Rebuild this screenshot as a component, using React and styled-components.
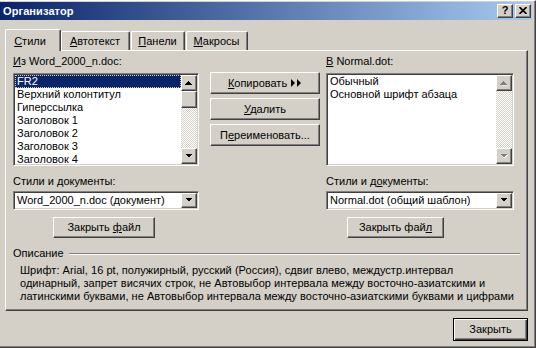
import React from 'react';
import styled, { createGlobalStyle, css } from 'styled-components';

const Global = createGlobalStyle`
  html, body { margin: 0; padding: 0; background: #D4D0C8; }
  body { font-family: "Liberation Sans", Arial, sans-serif; font-size: 11px; color: #000; }
  * { box-sizing: border-box; }
`;

const raised = css`
  border-style: solid;
  border-width: 1px;
  border-color: #fff #404040 #404040 #fff;
  box-shadow: inset -1px -1px 0 #808080;
`;

const sunken = css`
  border-style: solid;
  border-width: 1px;
  border-color: #808080 #fff #fff #808080;
  box-shadow: inset 1px 1px 0 #404040, inset -1px -1px 0 #D4D0C8;
`;

const Window = styled.div`
  width: 536px;
  height: 348px;
  display: flex;
  flex-direction: column;
  background: #D4D0C8;
  border-top: 1px solid #fff;
  border-right: 1px solid #404040;
  border-bottom: 1px solid #404040;
  box-shadow: inset -1px -1px 0 #808080;
  padding: 1px 3px 0 0;
`;

const TitleBar = styled.div`
  height: 18px;
  display: flex;
  align-items: center;
  justify-content: space-between;
  padding: 0 1px 0 3px;
  background: linear-gradient(to right, #0A246A, #A6CAF0);
`;

const TitleText = styled.span`
  color: #fff;
  font-weight: bold;
  font-size: 11px;
  letter-spacing: 0.1px;
`;

const TitleButtons = styled.div`
  display: flex;
  gap: 2px;
`;

const TitleBtn = styled.div`
  width: 16px;
  height: 14px;
  background: #D4D0C8;
  ${raised};
  display: flex;
  align-items: center;
  justify-content: center;
  font-weight: bold;
  font-size: 11px;
  line-height: 1;
  padding-bottom: 1px;
`;

const Body = styled.div`
  flex: 1;
  display: flex;
  flex-direction: column;
  padding: 9px 4px 0 5px;
`;

const TabRow = styled.div`
  display: flex;
  align-items: flex-end;
  height: 21px;
`;

const Tab = styled.div`
  position: relative;
  z-index: ${p => (p.$active ? 2 : 0)};
  width: ${p => p.$w}px;
  height: ${p => (p.$active ? 22 : 19)}px;
  margin-left: ${p => p.$ml || 0}px;
  margin-bottom: ${p => (p.$active ? -1 : 0)}px;
  background: #D4D0C8;
  border-top: 1px solid #fff;
  border-left: 1px solid #fff;
  border-right: 1px solid #404040;
  border-radius: 2px 2px 0 0;
  box-shadow: inset -1px 0 0 #808080;
  display: flex;
  justify-content: center;
  padding-top: ${p => (p.$active ? 5 : 3)}px;
  padding-right: ${p => (p.$active ? 6 : 1)}px;
  line-height: 13px;
`;

const Panel = styled.div`
  height: 261px;
  background: #D4D0C8;
  border-top: 1px solid #fff;
  border-left: 1px solid #fff;
  border-right: 1px solid #404040;
  border-bottom: 1px solid #404040;
  box-shadow: inset -1px -1px 0 #808080;
  padding: 4px 7px 0 7px;
  display: flex;
  flex-direction: column;
`;

const Columns = styled.div`
  display: flex;
`;

const Column = styled.div`
  display: flex;
  flex-direction: column;
  width: ${p => p.$w}px;
  margin-left: ${p => p.$ml || 0}px;
  padding-top: ${p => p.$pt || 0}px;
  gap: ${p => p.$gap || 0}px;
`;

const Label = styled.div`
  height: 13px;
  line-height: 13px;
  margin-top: ${p => p.$mt || 0}px;
  white-space: nowrap;
`;

const ListBox = styled.div`
  ${sunken};
  background: #fff;
  height: 93px;
  margin-top: 5px;
  padding: 1px;
  display: flex;
`;

const Items = styled.div`
  flex: 1;
  overflow: hidden;
`;

const Item = styled.div`
  height: 13px;
  line-height: 12px;
  padding-left: 2px;
  white-space: nowrap;
  ${p => p.$selected && css`
    background: #0A246A;
    color: #fff;
    outline: 1px dotted #D4D0C8;
    outline-offset: -1px;
  `}
`;

const ScrollBar = styled.div`
  width: 16px;
  display: flex;
  flex-direction: column;
`;

const ScrollBtn = styled.div`
  width: 16px;
  height: ${p => p.$h || 16}px;
  flex: none;
  background: #D4D0C8;
  ${raised};
  display: flex;
  align-items: center;
  justify-content: center;
`;

const Track = styled.div`
  flex: 1;
  display: flex;
  flex-direction: column;
  background-image: repeating-conic-gradient(#fff 0% 25%, #D4D0C8 0% 50%);
  background-size: 2px 2px;
`;

const Combo = styled.div`
  ${sunken};
  background: #fff;
  height: 19px;
  margin-top: 3px;
  padding: 1px;
  display: flex;
  align-items: stretch;
`;

const ComboText = styled.div`
  flex: 1;
  line-height: 15px;
  padding-left: 2px;
  white-space: nowrap;
`;

const Button = styled.div`
  height: ${p => p.$h || 22}px;
  width: ${p => (p.$w ? `${p.$w}px` : 'auto')};
  margin-left: ${p => p.$ml || 0}px;
  margin-top: ${p => p.$mt || 0}px;
  background: #D4D0C8;
  ${raised};
  display: flex;
  align-items: center;
  justify-content: center;
  gap: 4px;
  white-space: nowrap;
  padding-bottom: 1px;
  ${p => p.$default && css`
    border: 1px solid #000;
    box-shadow: inset 1px 1px 0 #fff, inset -1px -1px 0 #404040, inset -2px -2px 0 #808080;
  `}
`;

const GroupHeader = styled.div`
  display: flex;
  align-items: center;
  margin-top: 9px;
  height: 13px;
  line-height: 13px;
`;

const GroupLine = styled.div`
  flex: 1;
  margin-left: 5px;
  height: 2px;
  border-top: 1px solid #808080;
  border-bottom: 1px solid #fff;
`;

const Description = styled.div`
  margin-top: 4px;
  padding-left: 7px;
  line-height: 13px;
  white-space: nowrap;
  letter-spacing: 0.04px;
`;

const Footer = styled.div`
  display: flex;
  justify-content: flex-end;
  padding-top: 7px;
`;

const Arrow = ({ dir = 'down', disabled }) => {
  const pts = dir === 'down' ? '0,0 7,0 3.5,3.5' : '0,3.5 7,3.5 3.5,0';
  return (
    <svg width="8" height="5" viewBox="0 0 8 5">
      {disabled && (
        <polygon points={pts} transform="translate(1,1)" fill="#fff" />
      )}
      <polygon points={pts} fill={disabled ? '#808080' : '#000'} shapeRendering="crispEdges" />
    </svg>
  );
};

const DoubleArrow = () => (
  <svg width="11" height="8" viewBox="0 0 11 8">
    <polygon points="0,0 4,4 0,8" fill="#000" />
    <polygon points="6,0 10,4 6,8" fill="#000" />
  </svg>
);

const CloseGlyph = () => (
  <svg width="8" height="7" viewBox="0 0 8 7">
    <path d="M0.5 0 L7.5 7 M7.5 0 L0.5 7" stroke="#000" strokeWidth="1.6" />
  </svg>
);

const Scroll = ({ disabled }) => (
  <ScrollBar>
    <ScrollBtn><Arrow dir="up" disabled={disabled} /></ScrollBtn>
    <Track>{!disabled && <ScrollBtn $h={17} />}</Track>
    <ScrollBtn><Arrow dir="down" disabled={disabled} /></ScrollBtn>
  </ScrollBar>
);

const ComboBox = ({ text }) => (
  <Combo>
    <ComboText>{text}</ComboText>
    <ScrollBtn $h={15}><Arrow dir="down" /></ScrollBtn>
  </Combo>
);

const leftItems = ['FR2', 'Верхний колонтитул', 'Гиперссылка', 'Заголовок 1', 'Заголовок 2', 'Заголовок 3', 'Заголовок 4'];
const rightItems = ['Обычный', 'Основной шрифт абзаца'];

export default function App() {
  return (
    <>
      <Global />
      <Window>
        <TitleBar>
          <TitleText>Организатор</TitleText>
          <TitleButtons>
            <TitleBtn>?</TitleBtn>
            <TitleBtn><CloseGlyph /></TitleBtn>
          </TitleButtons>
        </TitleBar>
        <Body>
          <TabRow>
            <Tab $active $w={56}><span><u>С</u>тили</span></Tab>
            <Tab $w={69} $ml={0}><span><u>А</u>втотекст</span></Tab>
            <Tab $w={54} $ml={1}><span><u>П</u>анели</span></Tab>
            <Tab $w={62} $ml={1}><span><u>М</u>акросы</span></Tab>
          </TabRow>
          <Panel>
            <Columns>
              <Column $w={186}>
                <Label><u>И</u>з Word_2000_n.doc:</Label>
                <ListBox>
                  <Items>
                    {leftItems.map((t, i) => (
                      <Item key={t} $selected={i === 0}>{t}</Item>
                    ))}
                  </Items>
                  <Scroll />
                </ListBox>
                <Label $mt={9}>Стили и <u>д</u>окументы:</Label>
                <ComboBox text="Word_2000_n.doc (документ)" />
                <Button $mt={7} $h={21} $w={102} $ml={40}><span>Закрыть <u>ф</u>айл</span></Button>
              </Column>
              <Column $w={110} $ml={11} $pt={17} $gap={4}>
                <Button><span><u>К</u>опировать</span><DoubleArrow /></Button>
                <Button><span><u>У</u>далить</span></Button>
                <Button><span>П<u>е</u>реименовать...</span></Button>
              </Column>
              <Column $w={188} $ml={6}>
                <Label><u>В</u> Normal.dot:</Label>
                <ListBox>
                  <Items>
                    {rightItems.map(t => (
                      <Item key={t}>{t}</Item>
                    ))}
                  </Items>
                  <Scroll disabled />
                </ListBox>
                <Label $mt={9}>Стили и д<u>о</u>кументы:</Label>
                <ComboBox text="Normal.dot (общий шаблон)" />
                <Button $mt={7} $h={21} $w={97} $ml={21}><span>Закрыть фай<u>л</u></span></Button>
              </Column>
            </Columns>
            <GroupHeader>
              <span>Описание</span>
              <GroupLine />
            </GroupHeader>
            <Description>
              Шрифт: Arial, 16 pt, полужирный, русский (Россия), сдвиг влево, междустр.интервал<br />
              одинарный, запрет висячих строк, не Автовыбор интервала между восточно-азиатскими и<br />
              латинскими буквами, не Автовыбор интервала между восточно-азиатскими буквами и цифрами
            </Description>
          </Panel>
          <Footer>
            <Button $default $w={75} $h={23}><span>Закрыть</span></Button>
          </Footer>
        </Body>
      </Window>
    </>
  );
}
